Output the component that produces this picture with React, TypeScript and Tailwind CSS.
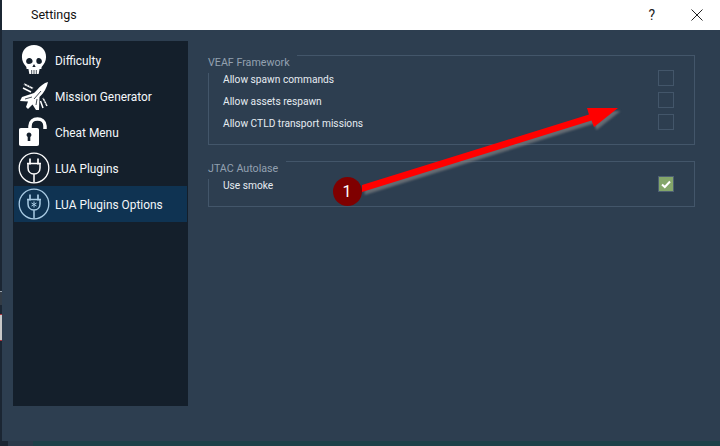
import React from "react";

const font = { fontFamily: 'Roboto, "Noto Sans", sans-serif' };

function Skull() {
  return (
    <svg width="26" height="30" viewBox="0 0 28 30" preserveAspectRatio="none">
      <path fillRule="evenodd" fill="#fff" d="M14 0C6 0 1 5 1 12c0 4 2 7 4 9 1 1 1 2 1 3l2 0 1 5h10l1-5 2 0c0-1 0-2 1-3 2-2 4-5 4-9C27 5 22 0 14 0ZM9 13c2 0 3.500 1.500 3.500 3.200S10.500 19 8.500 19 5.500 17.800 5.500 16.200 7 13 9 13Zm10 0c2 0 3.500 1.500 3.500 3.200S21.500 19 19.500 19s-3-1.200-3-2.800S17 13 19 13Zm-5 6 1.800 3h-3.600Z" />
      <path stroke="#141f2b" strokeWidth="0.8" d="M11.500 25v4M14 25v4M16.500 25v4" />
    </svg>
  );
}

function Jet() {
  return (
    <svg width="30" height="30" viewBox="0 0 30 30">
      <path fill="#fff" d="M29 1C25 2 21 5 18 9L15 12 3 16 1 20 9 20.500 7 26 9 28 13 24 13.500 23.500 17 29 20 29 20.500 16C25 12 28 6 29 1Z" />
      <path stroke="#141f2b" strokeWidth="0.800" fill="none" d="M6 18l7-2M15 18l7-8M17 24l1-6" />
      <path stroke="#fff" strokeWidth="1.500" fill="none" d="M5 3l9 4.500M4 7l8 4M24 17l4 8M21.500 20l2.500 7" />
      <path stroke="#141f2b" strokeWidth="0.800" strokeDasharray="1 2" fill="none" d="M5 3l9 4.500M24 17l4 8" />
    </svg>
  );
}

function Unlock() {
  return (
    <svg width="31" height="30" viewBox="0 0 31 30">
      <path fill="none" stroke="#fff" strokeWidth="3.500" d="M11 12V9c0-4.500 3.500-7 7.500-7s7.500 2.500 7.500 7v3" />
      <path fillRule="evenodd" fill="#fff" d="M2 11h16c1.500 0 2 .7 2 2v14c0 1.300-.5 2-2 2H2c-1.500 0-2-.7-2-2V13c0-1.300.5-2 2-2Zm8 4.500a2.500 2.500 0 0 0-1.300 4.600V24h2.600v-3.900A2.500 2.500 0 0 0 10 15.500Z" />
    </svg>
  );
}

function Plug({ color, star }: { color: string; star?: boolean }) {
  return (
    <svg width="32" height="32" viewBox="0 0 32 32" fill="none" stroke={color}>
      <circle cx="16" cy="16" r="14.800" strokeWidth="1.300" />
      <path strokeWidth="1.700" d="M12 6.500v6M20 6.500v6" />
      <path strokeWidth="1.500" d="M9 11.500h14M10 12v4c0 3.500 2.500 6 6 6s6-2.500 6-6v-4M16 22v8.500" />
      {star && <path strokeWidth="1" d="M16 13.500v6M13.500 15l5 3M18.500 15l-5 3" />}
    </svg>
  );
}

const items = [
  { label: "Difficulty", icon: <Skull /> },
  { label: "Mission Generator", icon: <Jet /> },
  { label: "Cheat Menu", icon: <Unlock /> },
  { label: "LUA Plugins", icon: <Plug color="#fff" /> },
  { label: "LUA Plugins Options", icon: <Plug color="#a9cbe4" star />, active: true },
];

function Box({ checked }: { checked?: boolean }) {
  return checked ? (
    <div className="w-[16px] h-[16px] border border-[#4e6072] bg-[#84a66a] flex items-center justify-center shrink-0">
      <svg width="12" height="12" viewBox="0 0 12 12">
        <path d="M2 6.500 4.800 9 10 3.500" fill="none" stroke="#fff" strokeWidth="2" />
      </svg>
    </div>
  ) : (
    <div className="w-[16px] h-[16px] border border-[#43566a] shrink-0" />
  );
}

function Row({ label, checked }: { label: string; checked?: boolean }) {
  return (
    <div className="h-[22px] flex items-center justify-between pl-[14px] pr-[20px]">
      <span className="mt-[4px] text-[10.200px] text-[#e6ecf2]">{label}</span>
      <Box checked={checked} />
    </div>
  );
}

function Group({ title, titleW, rows, h, mt }: { title: string; titleW: string; rows: { label: string; checked?: boolean }[]; h: string; mt: string }) {
  return (
    <div className={`relative border border-[#43566a] ${h} ${mt} pt-[11px]`}>
      <div className={`absolute left-[-1px] top-[-1px] h-[18px] bg-[#2d3e50] text-[10.700px] text-[#93a1b0] leading-[13px] ${titleW}`}>
        <span className="block pt-[1px]">{title}</span>
      </div>
      <div className="relative">
        {rows.map((r) => (
          <Row key={r.label} {...r} />
        ))}
      </div>
    </div>
  );
}

export default function App() {
  return (
    <div className="relative w-[720px] h-[446px] overflow-hidden bg-[#1d4048] flex flex-col" style={font}>
      <div className="h-[441px] flex">
        <div className="w-[2px] bg-[#1b2633] flex flex-col">
          <div className="h-[291px]" />
          <div className="h-[1px] bg-[#9aa3ad]" />
          <div className="h-[13px] bg-[#333c46]" />
          <div className="h-[9px]" />
          <div className="h-[1px] bg-[#a8323c]" />
          <div className="h-[25px] bg-[#c9c9c9]" />
          <div className="h-[1px] bg-[#a8323c]" />
        </div>
        <div className="flex-1 flex flex-col bg-[#2d3e50]">
          <div className="h-[30px] bg-white flex items-center shrink-0">
            <span className="ml-[29px] text-[12.500px] text-[#111] leading-none">Settings</span>
            <div className="ml-auto flex items-center">
              <span className="text-[14px] text-[#222] mr-[36px] leading-none">?</span>
              <svg width="12" height="12" viewBox="0 0 12 12" className="mr-[17px]">
                <path d="M.5.500l11 11M11.500.500l-11 11" stroke="#222" strokeWidth="1" fill="none" />
              </svg>
            </div>
          </div>
          <div className="flex-1 flex pl-[11px] pt-[11px] pr-[25px]">
            <div className="w-[175px] h-[365px] bg-[#141f2b] pt-[1px] px-[1px] shrink-0">
              {items.map((it) => (
                <div key={it.label} className={`h-[36px] flex items-center ${it.active ? "bg-[#0f3352]" : ""}`}>
                  <div className="w-[34px] flex justify-center ml-[3px] shrink-0">{it.icon}</div>
                  <span className="ml-[4px] mt-[4px] text-[11.900px] text-[#f4f7fa]">{it.label}</span>
                </div>
              ))}
            </div>
            <div className="flex-1 ml-[20px] pt-[14px]">
              <Group
                title="VEAF Framework"
                titleW="w-[89px]"
                h="h-[90px]"
                mt=""
                rows={[
                  { label: "Allow spawn commands" },
                  { label: "Allow assets respawn" },
                  { label: "Allow CTLD transport missions" },
                ]}
              />
              <Group
                title="JTAC Autolase"
                titleW="w-[78px]"
                h="h-[46px]"
                mt="mt-[16px]"
                rows={[{ label: "Use smoke", checked: true }]}
              />
            </div>
          </div>
        </div>
      </div>
      <div className="flex-1 flex">
        <div className="w-[8px] bg-[#1b2633]" />
        <div className="w-[25px] bg-[#2a3a4a]" />
        <div className="flex-1 bg-[#1d4048]" />
      </div>

      <svg className="absolute inset-0 pointer-events-none" width="720" height="446" viewBox="0 0 720 446">
        <defs>
          <filter id="s" x="-10%" y="-30%" width="120%" height="160%">
            <feGaussianBlur stdDeviation="1.200" />
          </filter>
        </defs>
        <g fill="#8a8a8a" filter="url(#s)" opacity="0.6" transform="translate(2.500 3)">
          <path d="M362 185 589 114.500 587 108 618 108 594 127 591.500 120.500 362 192Z" />
        </g>
        <path fill="#ff0000" d="M362 185 589 114.500 587 108 618 108 594 127 591.500 120.500 362 192Z" />
      </svg>
      <div className="absolute left-[333px] top-[177px] w-[29px] h-[29px] rounded-full bg-[#7f0000] flex items-center justify-center text-white text-[16px] pr-[1px]">
        1
      </div>
    </div>
  );
}
